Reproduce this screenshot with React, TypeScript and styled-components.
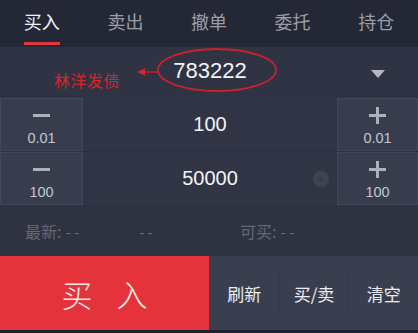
import React from "react";
import styled, { createGlobalStyle } from "styled-components";

const Global = createGlobalStyle`
  html, body { margin: 0; padding: 0; background: #1f2230; }
  body { font-family: "Noto Sans CJK SC", "Noto Sans", sans-serif; }
  * { box-sizing: border-box; }
`;

const Page = styled.div`
  width: 418px;
  height: 333px;
  display: flex;
  flex-direction: column;
  background: #2e3241;
  overflow: hidden;
`;

const Tabs = styled.div`
  height: 47px;
  display: flex;
  background: #242836;
`;

const Tab = styled.div<{ $active?: boolean }>`
  flex: 1;
  display: flex;
  flex-direction: column;
  align-items: center;
  justify-content: flex-start;
  padding-top: 8px;
  font-size: 18px;
  line-height: 26px;
  color: ${(p) => (p.$active ? "#f2f2f5" : "#9a9eab")};
  &::after {
    content: "";
    display: block;
    margin-top: 8px;
    width: 36px;
    height: 3px;
    background: ${(p) => (p.$active ? "#e0373d" : "transparent")};
  }
`;

const CodeRow = styled.div`
  position: relative;
  height: 51px;
  display: flex;
  align-items: center;
  justify-content: center;
  background: #2f3343;
`;

const Code = styled.div`
  font-family: "Liberation Sans", Arial, sans-serif;
  font-size: 22px;
  color: #f4f4f6;
  margin-left: 2px;
  margin-top: -4px;
`;

const Note = styled.div`
  position: absolute;
  left: 54px;
  top: 22px;
  font-size: 16px;
  line-height: 22px;
  color: #d3272d;
  letter-spacing: 0.5px;
`;

const Annot = styled.svg`
  position: absolute;
  left: 0;
  top: 0;
`;

const Caret = styled.svg`
  position: absolute;
  right: 33px;
  top: 23px;
`;

const Steppers = styled.div`
  display: flex;
  flex-direction: column;
  gap: 1px;
  background: #2c3040;
`;

const StepRow = styled.div`
  height: 53px;
  display: flex;
`;

const StepBtn = styled.div<{ $w: number }>`
  width: ${(p) => p.$w}px;
  display: flex;
  flex-direction: column;
  align-items: center;
  justify-content: center;
  gap: 6px;
  background: #383d4e;
  border: 1px solid #42475a;
  color: #c4c7d0;
  font-family: "Liberation Sans", Arial, sans-serif;
  font-size: 14.5px;
  line-height: 16px;
`;

const Sign = styled.div<{ $plus?: boolean }>`
  position: relative;
  width: 17px;
  height: 17px;
  margin-top: 4px;
  &::before {
    content: "";
    position: absolute;
    left: 0;
    top: 7px;
    width: 17px;
    height: 3px;
    background: #aeb1bc;
  }
  &::after {
    content: "";
    position: absolute;
    left: 7px;
    top: 0;
    width: 3px;
    height: 17px;
    background: #aeb1bc;
    display: ${(p) => (p.$plus ? "block" : "none")};
  }
`;

const Field = styled.div`
  flex: 1;
  position: relative;
  display: flex;
  align-items: center;
  justify-content: center;
  background: #303445;
  font-family: "Liberation Sans", Arial, sans-serif;
  font-size: 20px;
  color: #f4f4f6;
`;

const ClearDot = styled.div`
  position: absolute;
  right: 8px;
  top: 19px;
  width: 16px;
  height: 16px;
  border-radius: 50%;
  background: #3f4352;
  color: #30344a;
  font-size: 11px;
  line-height: 16px;
  text-align: center;
`;

const Info = styled.div`
  height: 51px;
  display: flex;
  align-items: center;
  padding-left: 25px;
  font-size: 16px;
  color: #646979;
  background: #2e3241;
`;

const InfoItem = styled.span<{ $w: number }>`
  width: ${(p) => p.$w}px;
  white-space: pre;
`;

const Dash = styled.span`
  letter-spacing: 3px;
  margin-left: 4px;
`;

const Bottom = styled.div`
  height: 74px;
  display: flex;
  background: #3a3f4f;
`;

const BuyBtn = styled.div`
  width: 209px;
  display: flex;
  align-items: center;
  justify-content: center;
  background: #e4333a;
  color: #fbe9ea;
  font-size: 31px;
  letter-spacing: 24px;
  padding-left: 24px;
  font-weight: 300;
`;

const Actions = styled.div`
  flex: 1;
  display: flex;
  align-items: center;
  padding-left: 1px;
`;

const Action = styled.div<{ $last?: boolean }>`
  flex: 1;
  height: 46px;
  display: flex;
  align-items: center;
  justify-content: center;
  font-size: 17px;
  color: #eeeef2;
  border-right: ${(p) => (p.$last ? "none" : "1px solid #343848")};
`;

const Foot = styled.div`
  flex: 1;
  background: #1d2030;
`;

export default function App() {
  const tabs = ["买入", "卖出", "撤单", "委托", "持仓"];
  return (
    <Page>
      <Global />
      <Tabs>
        {tabs.map((t, i) => (
          <Tab key={t} $active={i === 0}>
            {t}
          </Tab>
        ))}
      </Tabs>
      <CodeRow>
        <Code>783222</Code>
        <Note>林洋发债</Note>
        <Annot width="418" height="51" viewBox="0 0 418 51">
          <ellipse cx="217" cy="23" rx="59" ry="21" fill="none" stroke="#c8222a" strokeWidth="1.8" />
          <line x1="142" y1="25" x2="158" y2="25" stroke="#c8222a" strokeWidth="1.4" />
          <polygon points="137,25 145,21.5 145,28.5" fill="#d3272d" />
        </Annot>
        <Caret width="14" height="8" viewBox="0 0 14 8">
          <polygon points="0,0 14,0 7,8" fill="#b5b8c3" />
        </Caret>
      </CodeRow>
      <Steppers>
        <StepRow>
          <StepBtn $w={83}>
            <Sign />
            0.01
          </StepBtn>
          <Field>100</Field>
          <StepBtn $w={81}>
            <Sign $plus />
            0.01
          </StepBtn>
        </StepRow>
        <StepRow>
          <StepBtn $w={83}>
            <Sign />
            100
          </StepBtn>
          <Field>
            50000
            <ClearDot>×</ClearDot>
          </Field>
          <StepBtn $w={81}>
            <Sign $plus />
            100
          </StepBtn>
        </StepRow>
      </Steppers>
      <Info>
        <InfoItem $w={110}>
          最新:<Dash>--</Dash>
        </InfoItem>
        <InfoItem $w={105}>
          <Dash>--</Dash>
        </InfoItem>
        <InfoItem $w={120}>
          可买:<Dash>--</Dash>
        </InfoItem>
      </Info>
      <Bottom>
        <BuyBtn>买入</BuyBtn>
        <Actions>
          <Action>刷新</Action>
          <Action>买/卖</Action>
          <Action $last>清空</Action>
        </Actions>
      </Bottom>
      <Foot />
    </Page>
  );
}
